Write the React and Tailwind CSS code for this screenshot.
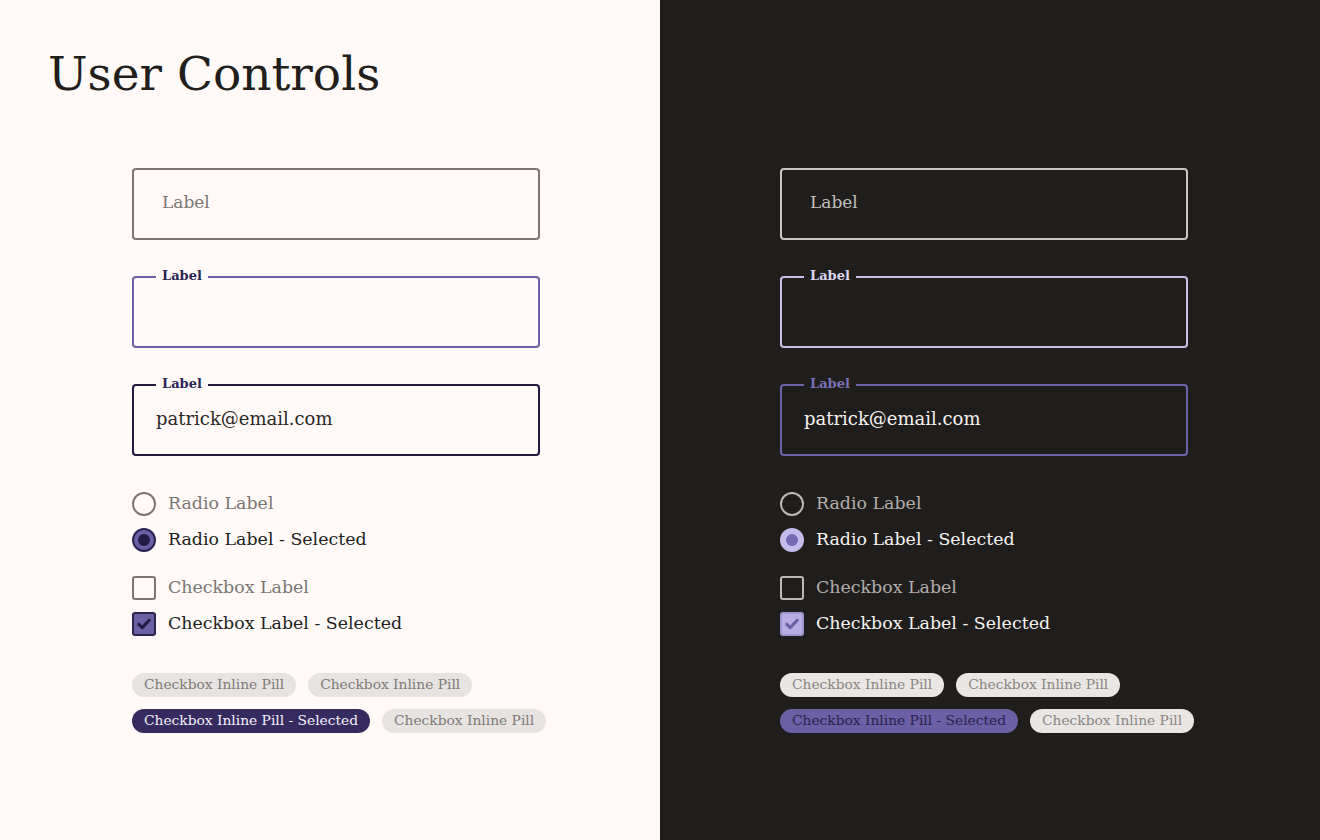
import React from "react";

const themes = {
  light: {
    panel: "bg-[#fffaf7]",
    idleBorder: "border-[#7a7572]",
    idleText: "text-[#7a7572]",
    focusBorder: "border-[#6b61a6]",
    focusLabel: "text-[#2a2553]",
    filledBorder: "border-[#1f1a3b]",
    filledLabel: "text-[#2a2553]",
    value: "text-[#2b2826]",
    labelBg: "bg-[#fffaf7]",
    mutedText: "text-[#7a7572]",
    strongText: "text-[#211e1c]",
    radioIdle: "border-[#7a7572]",
    radioOn: "border-[#2a2350] bg-[#6b5fa5]",
    radioDot: "bg-[#221c45]",
    checkIdle: "border-[#7a7572]",
    checkOn: "border-[#2a2350] bg-[#6b5fa5]",
    checkMark: "#221c45",
    pill: "bg-[#e7e3e1] text-[#7f7a77]",
    pillOn: "bg-[#352b5f] text-[#f5f1f8]",
  },
  dark: {
    panel: "bg-[#201e1d]",
    idleBorder: "border-[#c9c5c2]",
    idleText: "text-[#c2bebb]",
    focusBorder: "border-[#c8c0ea]",
    focusLabel: "text-[#ddd6f3]",
    filledBorder: "border-[#6e63aa]",
    filledLabel: "text-[#7b70b8]",
    value: "text-[#f6f2ef]",
    labelBg: "bg-[#201e1d]",
    mutedText: "text-[#b3aeab]",
    strongText: "text-[#f8f4f1]",
    radioIdle: "border-[#bdb8b5]",
    radioOn: "border-[#c4bbec] bg-[#c4bbec]",
    radioDot: "bg-[#7469b5]",
    checkIdle: "border-[#bdb8b5]",
    checkOn: "border-[#9f94d4] bg-[#b7ace4]",
    checkMark: "#6b5fa5",
    pill: "bg-[#e9e6e4] text-[#8a8582]",
    pillOn: "bg-[#6b5fa5] text-[#2a2350]",
  },
};

const Field = ({ t, border, label, labelColor, value, placeholder }) => (
  <div className={`relative h-[72px] w-[408px] rounded-[4px] border-2 ${border} flex items-center`}>
    {label && (
      <span className={`absolute -top-[12px] left-[22px] px-[6px] text-[13px] font-bold leading-[20px] ${t.labelBg} ${labelColor}`}>
        {label}
      </span>
    )}
    {placeholder && <span className={`pl-[28px] -mt-[3px] text-[17px] ${t.idleText}`}>{placeholder}</span>}
    {value && <span className={`pl-[22px] -mt-[4px] text-[18px] ${t.value}`}>{value}</span>}
  </div>
);

const Radio = ({ t, on, children }) => (
  <div className="flex items-center gap-[12px] h-[24px]">
    <span className={`w-[24px] h-[24px] rounded-full border-2 flex items-center justify-center ${on ? t.radioOn : t.radioIdle}`}>
      {on && <span className={`w-[12px] h-[12px] rounded-full ${t.radioDot}`} />}
    </span>
    <span className={`text-[17.4px] -mt-[2px] ${on ? t.strongText : t.mutedText}`}>{children}</span>
  </div>
);

const Checkbox = ({ t, on, children }) => (
  <div className="flex items-center gap-[12px] h-[24px]">
    <span className={`w-[24px] h-[24px] rounded-[3px] border-2 flex items-center justify-center ${on ? t.checkOn : t.checkIdle}`}>
      {on && (
        <svg width="14" height="12" viewBox="0 0 14 12" fill="none">
          <path d="M1.8 6.2 L5.2 9.6 L12.2 2.2" stroke={t.checkMark} strokeWidth="3" strokeLinecap="round" strokeLinejoin="round" />
        </svg>
      )}
    </span>
    <span className={`text-[17.4px] -mt-[2px] ${on ? t.strongText : t.mutedText}`}>{children}</span>
  </div>
);

const Pill = ({ t, on, children }) => (
  <span className={`h-[24px] px-[12px] rounded-full flex items-center text-[13.8px] whitespace-nowrap ${on ? t.pillOn : t.pill}`}>
    <span className="-mt-[1px]">{children}</span>
  </span>
);

const Controls = ({ t }) => (
  <div className="flex flex-col">
    <div className="flex flex-col gap-[36px]">
      <Field t={t} border={t.idleBorder} placeholder="Label" />
      <Field t={t} border={t.focusBorder} label="Label" labelColor={t.focusLabel} />
      <Field t={t} border={t.filledBorder} label="Label" labelColor={t.filledLabel} value="patrick@email.com" />
    </div>
    <div className="mt-[36px] flex flex-col gap-[12px]">
      <Radio t={t}>Radio Label</Radio>
      <Radio t={t} on>Radio Label - Selected</Radio>
    </div>
    <div className="mt-[24px] flex flex-col gap-[12px]">
      <Checkbox t={t}>Checkbox Label</Checkbox>
      <Checkbox t={t} on>Checkbox Label - Selected</Checkbox>
    </div>
    <div className="mt-[37px] flex flex-col gap-[12px]">
      <div className="flex gap-[12px]">
        <Pill t={t}>Checkbox Inline Pill</Pill>
        <Pill t={t}>Checkbox Inline Pill</Pill>
      </div>
      <div className="flex gap-[12px]">
        <Pill t={t} on>Checkbox Inline Pill - Selected</Pill>
        <Pill t={t}>Checkbox Inline Pill</Pill>
      </div>
    </div>
  </div>
);

export default function App() {
  return (
    <div className="grid grid-cols-2 w-[1320px] h-[840px] overflow-hidden" style={{ fontFamily: '"DejaVu Serif", serif' }}>
      <div className={`${themes.light.panel} flex flex-col`}>
        <div className="h-[168px] pl-[48px] pt-[42px]">
          <h1 className="text-[47px] leading-[64px] text-[#211e1c]">User Controls</h1>
        </div>
        <div className="pl-[132px]">
          <Controls t={themes.light} />
        </div>
      </div>
      <div className={`${themes.dark.panel} flex flex-col`}>
        <div className="h-[168px]" />
        <div className="pl-[120px]">
          <Controls t={themes.dark} />
        </div>
      </div>
    </div>
  );
}
